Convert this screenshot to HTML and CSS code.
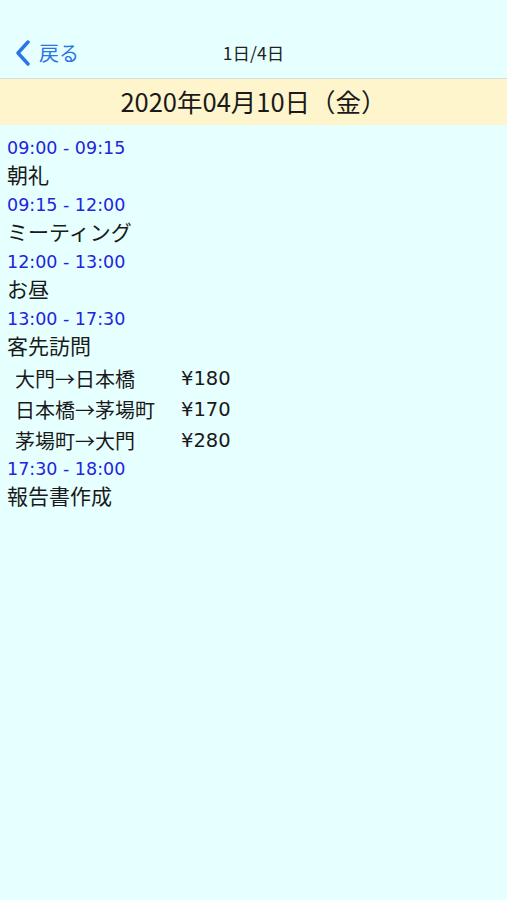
FILE: index.html
```html
<!DOCTYPE html>
<html lang="ja">
<head>
    <meta charset="UTF-8">
    <meta name="viewport" content="width=device-width, initial-scale=1.0">
    <title>1日/4日</title>
    <link rel="stylesheet" href="styles.css">
</head>

<body>
    <div class="nav-bar">
        <a class="back-button" href="#">
            <svg class="back-icon" width="18" height="26" viewBox="0 0 18 26">
                <path d="M14 2 L4 13 L14 24" fill="none" stroke="currentColor" stroke-width="3.4" stroke-linecap="round" stroke-linejoin="round"/>
            </svg>
            <span>戻る</span>
        </a>
        <div class="nav-title">1日/4日</div>
    </div>

    <div class="date-bar">2020年04月10日（金）</div>

    <div class="schedule">
        <div class="time">09:00 - 09:15</div>
        <div class="task">朝礼</div>

        <div class="time">09:15 - 12:00</div>
        <div class="task">ミーティング</div>

        <div class="time">12:00 - 13:00</div>
        <div class="task">お昼</div>

        <div class="time">13:00 - 17:30</div>
        <div class="task">客先訪問</div>
        <div class="routes">
            <div class="route">大門→日本橋</div>
            <div class="fare">¥180</div>
            <div class="route">日本橋→茅場町</div>
            <div class="fare">¥170</div>
            <div class="route">茅場町→大門</div>
            <div class="fare">¥280</div>
        </div>

        <div class="time">17:30 - 18:00</div>
        <div class="task">報告書作成</div>
    </div>
</body>
</html>
```

FILE: styles.css
```css
body {
    margin: 0;
    background-color: #e6ffff;
    font-family: "Noto Sans CJK JP", "Noto Sans", sans-serif;
    color: #1a1a1a;
}

.nav-bar {
    position: relative;
    height: 79px;
    border-bottom: 1px solid #d6dcdc;
    display: flex;
    align-items: center;
    justify-content: center;
    padding-top: 2px;
    box-sizing: border-box;
}

.back-button {
    position: absolute;
    left: 14px;
    top: 38px;
    display: flex;
    align-items: center;
    gap: 7px;
    color: #2a74e4;
    text-decoration: none;
    font-size: 20px;
}

.back-icon {
    display: block;
}

.nav-title {
    font-size: 17.5px;
    color: #222;
    margin-top: 24px;
}

.date-bar {
    height: 46px;
    padding-bottom: 3px;
    box-sizing: border-box;
    background-color: #fff5cc;
    display: flex;
    align-items: center;
    justify-content: center;
    font-size: 25.5px;
    color: #1a1a1a;
}

.schedule {
    padding: 10px 7px;
}

.time {
    font-family: "DejaVu Sans", sans-serif;
    font-size: 17.5px;
    line-height: 26px;
    color: #2323dd;
}

.task {
    font-size: 21px;
    line-height: 27px;
    margin-bottom: 4px;
}

.routes {
    display: grid;
    grid-template-columns: 166px auto;
    margin: 2px 0 0 8px;
    font-size: 20px;
    line-height: 31px;
}

.fare {
    font-family: "DejaVu Sans", sans-serif;
    font-size: 19.5px;
}
```
